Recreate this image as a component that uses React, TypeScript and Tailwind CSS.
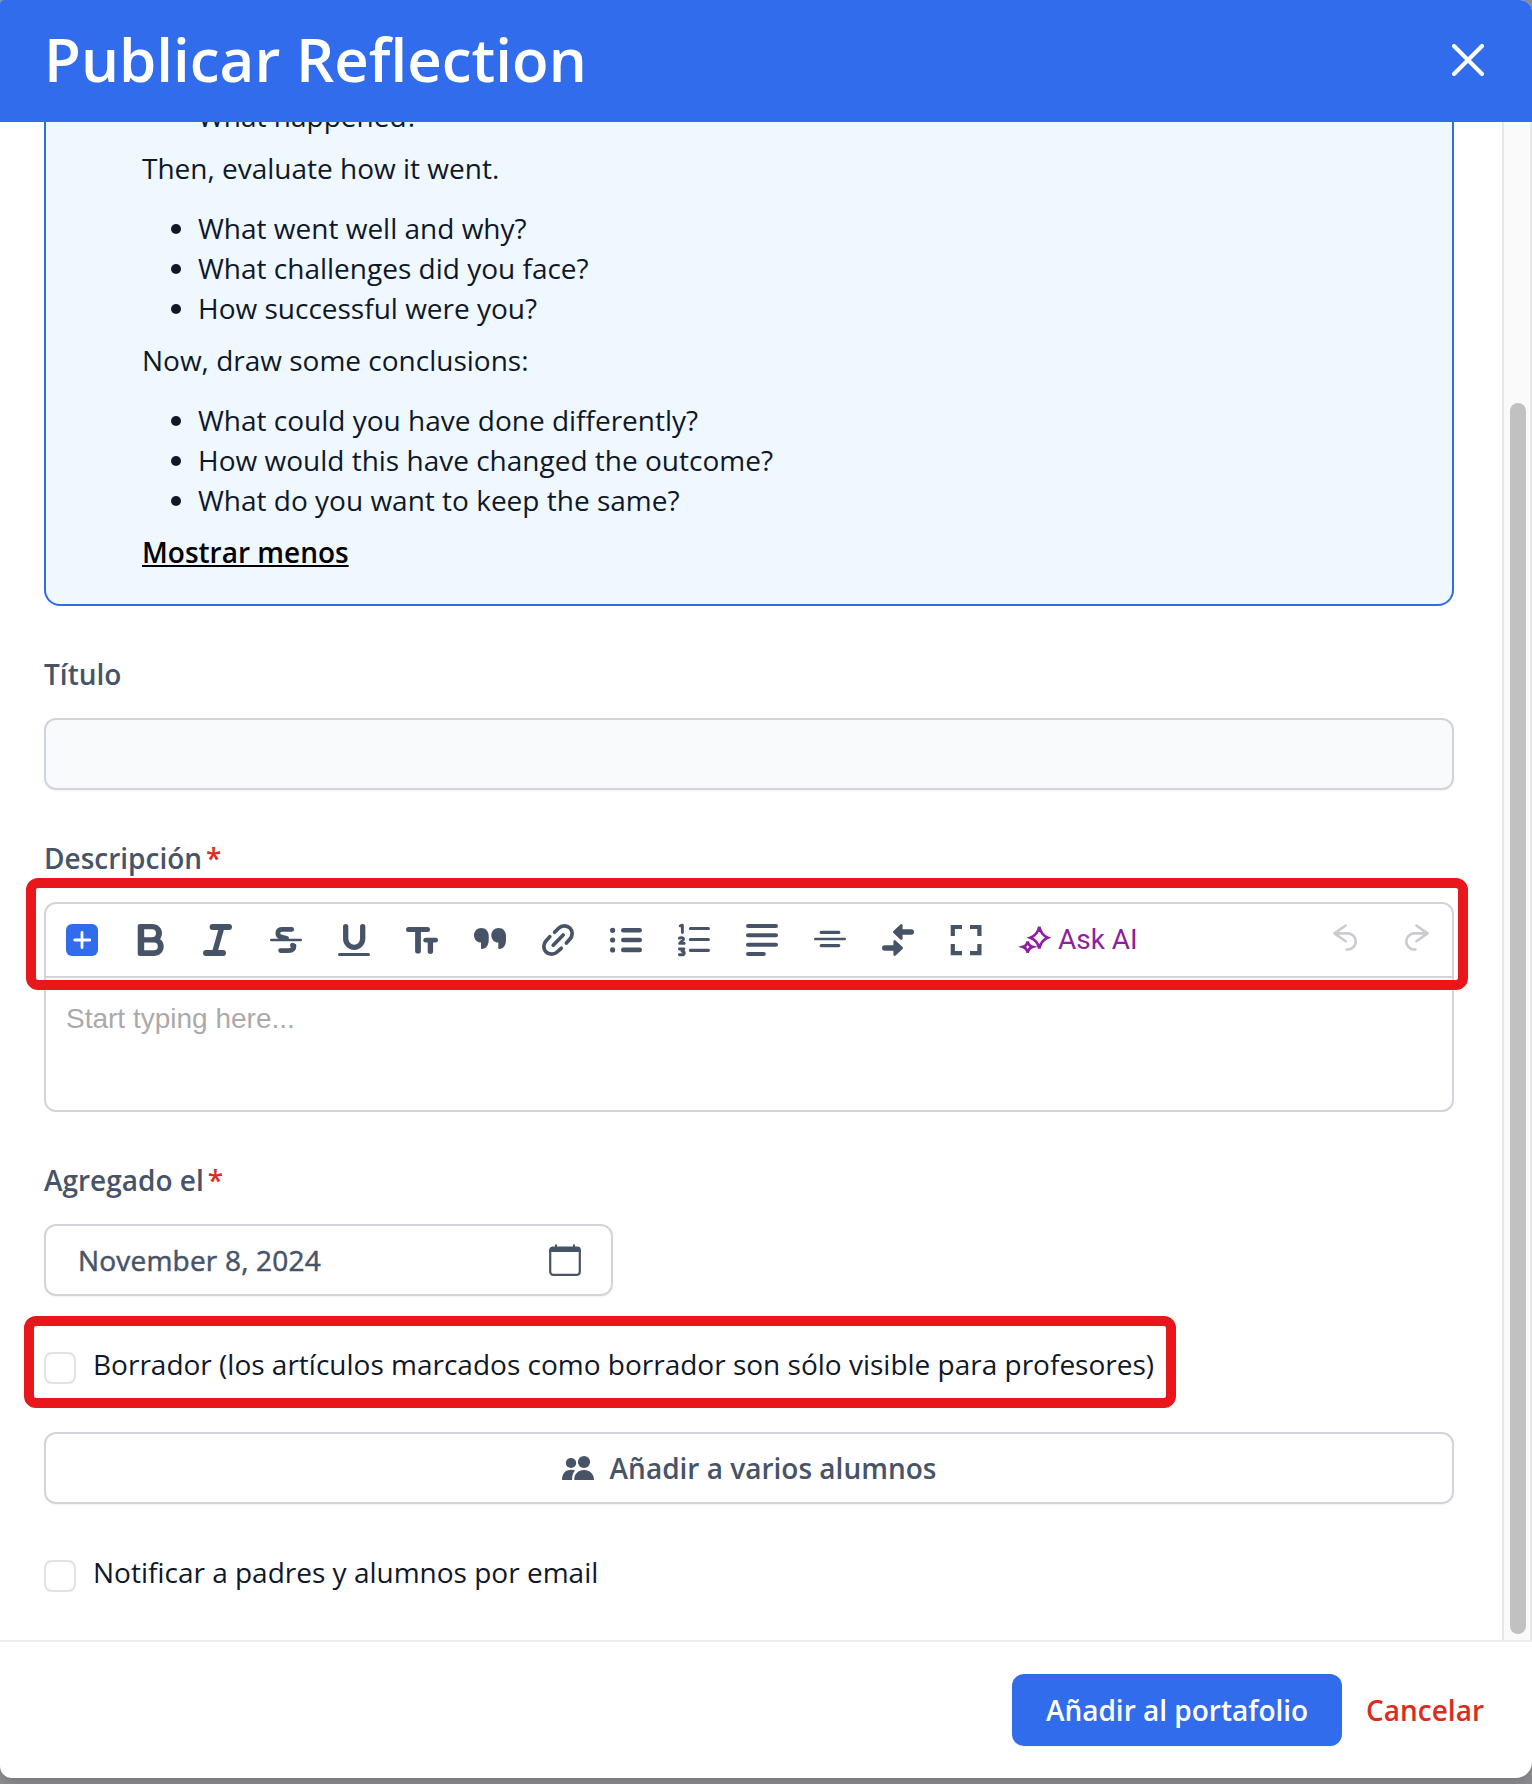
import type { ReactNode } from "react";

const evaluateQuestions = [
  "What went well and why?",
  "What challenges did you face?",
  "How successful were you?",
];

const conclusionQuestions = [
  "What could you have done differently?",
  "How would this have changed the outcome?",
  "What do you want to keep the same?",
];

function Icon({ children }: { children: ReactNode }) {
  return (
    <svg
      viewBox="0 0 32 32"
      className="size-8 shrink-0 overflow-visible"
      fill="none"
      stroke="currentColor"
      strokeLinecap="round"
      strokeLinejoin="round"
    >
      {children}
    </svg>
  );
}

function ToolbarIcons() {
  return (
    <>
      {/* Insert */}
      <Icon>
        <rect width="32" height="32" rx="6" fill="#306cec" stroke="none" />
        <path d="M8.8 16H23.8M16 8.3V23.5" stroke="#fff" strokeWidth="2.8" />
      </Icon>
      {/* Bold */}
      <Icon>
        <path
          fill="currentColor"
          stroke="none"
          fillRule="evenodd"
          d="M6 0H18C24 0 28 4 28 9C28 11.5 27.2 13.4 26 15C28.5 16.8 29.7 19.5 29.7 22.5C29.7 28 25.5 32 20 32H6A2.3 2.3 0 0 1 3.7 29.7V2.3A2.3 2.3 0 0 1 6 0ZM10.2 5.3V13.2H18A3.95 3.95 0 0 0 18 5.3ZM10.2 18.6V26.2H20A3.8 3.8 0 0 0 20 18.6Z"
        />
      </Icon>
      {/* Italic */}
      <Icon>
        <path d="M10.6 3H27M4 29H21" strokeWidth="6" />
        <path d="M19.6 4L12.8 28" strokeWidth="5.4" />
      </Icon>
      {/* Strikethrough */}
      <Icon>
        <path d="M1.1 16H30.9" strokeWidth="2.3" />
        <path d="M21.7 5.4H12.5C6.5 5.4 6.5 12 11.5 13.2L16.5 14.4" strokeWidth="4.8" />
        <path d="M10.6 26.6H18.5C22.5 26.6 24 24.5 24 21.8L22.5 21.3" strokeWidth="4.8" />
      </Icon>
      {/* Underline */}
      <Icon>
        <path d="M7.7 2.6V14.6A8.5 8.7 0 0 0 24.7 14.6V2.6" strokeWidth="5.3" />
        <path d="M1.5 30.5H30.5" strokeWidth="3" />
      </Icon>
      {/* Text size */}
      <Icon>
        <path d="M2.5 5.5H21.5" strokeWidth="5" />
        <path d="M12 6V26.7" strokeWidth="5.8" />
        <path d="M19.7 16.2H29.6" strokeWidth="4.8" />
        <path d="M24.4 17V27.2" strokeWidth="5.4" />
      </Icon>
      {/* Quote */}
      <Icon>
        <g fill="currentColor" stroke="none">
          <path d="M7.3 4C11.8 4 14.7 7.4 14.7 12V15.8C14.7 21.4 12.4 24.7 7.8 25C7.2 25 7 24.6 7 24.2V18.6C2.8 18.5 0 15.4 0 11.3C0 7.1 3.1 4 7.3 4Z" />
          <path d="M24.6 4C29.1 4 32 7.4 32 12V15.8C32 21.4 29.7 24.7 25.1 25C24.5 25 24.3 24.6 24.3 24.2V18.6C20.1 18.5 17.3 15.4 17.3 11.3C17.3 7.1 20.4 4 24.6 4Z" />
        </g>
      </Icon>
      {/* Link */}
      <Icon>
        <path
          d="M12.6 8.3L16.6 4.3C19.8 1.1 24.8 .9 27.9 4C31 7.1 30.9 12.2 27.7 15.3L24.4 19M7.8 12.6L4.3 16.6C1.1 19.8 1 24.8 4 27.9C7 31 12.2 30.9 15.4 27.7L19.2 24.3M11.2 21.2L21.2 11"
          strokeWidth="3.7"
        />
      </Icon>
      {/* Bullet list */}
      <Icon>
        <g fill="currentColor" stroke="none">
          <circle cx="2.6" cy="6.3" r="2.6" />
          <circle cx="2.6" cy="16" r="2.6" />
          <circle cx="2.6" cy="25.9" r="2.6" />
        </g>
        <path d="M13.3 6.3H29.7M13.3 16H29.7M13.3 25.9H29.7" strokeWidth="4.6" />
      </Icon>
      {/* Numbered list */}
      <Icon>
        <path d="M12.4 4.5H30.4M12.4 15.5H30.4M12.4 26.3H30.4" strokeWidth="3.2" />
        <path
          d="M2.2 1.8L4.4 1.2V8.6M1.4 14.1C3 13.3 5.6 13.4 5.6 15C5.6 17 2.2 17.6 1.6 19.4H6.2M1.4 25H5.9L4 27.2C7.2 27.4 6.8 30.8 4 30.8H1.4"
          strokeWidth="2.9"
        />
      </Icon>
      {/* Align left */}
      <Icon>
        <path d="M2 2H30M2 11.3H30M2 20.7H30M2 30H17.8" strokeWidth="4" />
      </Icon>
      {/* Divider */}
      <Icon>
        <path d="M7.2 8.4H24.8M7.2 21.6H24.8" strokeWidth="3.2" />
        <path d="M1.2 15H30.8" strokeWidth="2.4" />
      </Icon>
      {/* Page break */}
      <Icon>
        <path d="M17 8H29.2M2.8 24H15" strokeWidth="5.6" />
        <path
          d="M12.3 8L19.3 1.4V14.6ZM19.7 24L12.7 17.4V30.6Z"
          fill="currentColor"
          strokeWidth="2.6"
        />
      </Icon>
      {/* Fullscreen */}
      <Icon>
        <path
          d="M12 3H2.8V12M20 3H29.4V12M2.8 20V29.2H12M29.4 20V29.2H20"
          strokeWidth="4.2"
          strokeLinecap="butt"
          strokeLinejoin="miter"
        />
      </Icon>
    </>
  );
}

function FieldLabel({ text, required }: { text: string; required?: boolean }) {
  return (
    <label className="flex h-10 items-center gap-1 font-semibold text-[#475467]">
      {text}
      {required && <span className="text-[#d92d20]">*</span>}
    </label>
  );
}

function CheckRow({ text }: { text: string }) {
  return (
    <div className="flex h-10 items-start gap-[17px]">
      <span className="mt-2 size-8 shrink-0 rounded-lg border-2 border-[#e2e2e3] bg-white" />
      <span className="whitespace-nowrap">{text}</span>
    </div>
  );
}

export default function App() {
  return (
    <div className="h-[1784px] w-[1532px] overflow-hidden bg-[#8d8d91] font-['Open_Sans',sans-serif] text-[28px] leading-10 text-[#101828]">
      <div className="flex h-[1778px] flex-col overflow-hidden rounded-tl-[4px] rounded-tr-[12px] rounded-br-2xl rounded-bl-xl bg-white shadow-lg">
        {/* Header */}
        <header className="flex h-[122px] shrink-0 items-center justify-between bg-[#306cec] pr-12 pb-[3px] pl-11">
          <h1 className="pb-0.5 text-[60px] leading-[76px] font-semibold text-white">Publicar Reflection</h1>
          <svg viewBox="0 0 32 32" className="size-8 text-white" fill="none" stroke="currentColor">
            <path d="M2 2L30 30M30 2L2 30" strokeWidth="4" strokeLinecap="round" />
          </svg>
        </header>

        {/* Body */}
        <div className="flex h-[1518px] shrink-0">
          <main className="flex min-w-0 flex-1 flex-col overflow-hidden pr-12 pl-11">
            <section className="flex h-[484px] shrink-0 flex-col justify-end overflow-hidden rounded-b-2xl border-x-2 border-b-2 border-[#306cec] bg-[#eff7ff] pb-8 pl-24">
              <ul className="list-disc pl-14">
                <li>What happened?</li>
              </ul>
              <p className="mt-3">Then, evaluate how it went.</p>
              <ul className="mt-5 list-disc pl-14">
                {evaluateQuestions.map((q) => (
                  <li key={q}>{q}</li>
                ))}
              </ul>
              <p className="mt-3">Now, draw some conclusions:</p>
              <ul className="mt-5 list-disc pl-14">
                {conclusionQuestions.map((q) => (
                  <li key={q}>{q}</li>
                ))}
              </ul>
              <button className="mt-3 self-start font-semibold text-black underline">Mostrar menos</button>
            </section>

            <div className="mt-12">
              <FieldLabel text="Título" />
              <div className="mt-6 h-[72px] rounded-xl border-2 border-[#d0d5dd] bg-[#f9fafc] shadow-xs" />
            </div>

            <div className="relative mt-12">
              <FieldLabel text="Descripción" required />
              <div className="mt-6 h-[210px] rounded-xl border-2 border-[#d0d5dd]">
                <div className="flex h-[74px] items-center gap-9 border-b-2 border-[#d0d5dd] pr-[19px] pl-5 text-[#475467]">
                  <ToolbarIcons />
                  <span className="flex items-center gap-2 font-['Roboto',sans-serif] whitespace-nowrap text-[#8e1fa0]">
                    <Icon>
                      <path
                        d="M21.3 2.8C22.6 8.8 25.1 11.8 29.8 13.7C25.1 15.6 22.6 18.7 21.3 24.4C20 18.7 17.4 15.6 12.3 13.7C17.4 11.8 20 8.8 21.3 2.8ZM9.7 17.5C10.3 20.6 11.8 22.2 14.5 22.9C11.8 23.7 10.3 25.4 9.7 28.8C9.1 25.4 7.5 23.7 4.9 22.9C7.5 22.2 9.1 20.6 9.7 17.5Z"
                        strokeWidth="2.7"
                        strokeLinejoin="miter"
                      />
                    </Icon>
                    Ask AI
                  </span>
                  <span className="ml-auto flex items-center gap-10 text-[#c8cbd0]">
                    <Icon>
                      <path
                        d="M16.6 1.5L5.5 9.4L16.6 17.2M6 9.4H19.5A8.1 8.1 0 0 1 19.5 25.5H17.6"
                        strokeWidth="2.6"
                      />
                    </Icon>
                    <Icon>
                      <path
                        d="M15.4 1.5L26.5 9.4L15.4 17.2M26 9.4H12.5A8.1 8.1 0 0 0 12.5 25.5H14.4"
                        strokeWidth="2.6"
                      />
                    </Icon>
                  </span>
                </div>
                <p className="px-5 pt-[21px] font-['Liberation_Sans',sans-serif] text-[#aaaaaa]">Start typing here...</p>
              </div>
              {/* Toolbar highlight */}
              <div className="absolute top-10 -left-[18px] h-28 w-[1442px] rounded-xl border-[10px] border-[#e8171b]" />
            </div>

            <div className="mt-12">
              <FieldLabel text="Agregado el" required />
              <div className="mt-6 flex h-[72px] w-[569px] items-center justify-between rounded-xl border-2 border-[#d0d5dd] pr-[30px] pl-8 tracking-[0.2px] text-[#475467] shadow-xs [-webkit-text-stroke:0.5px_#475467]">
                November 8, 2024
                <Icon>
                  <rect x="1.2" y="4" width="29.6" height="26.8" rx="3" strokeWidth="2.2" />
                  <path d="M1.2 7V6A2.5 2.5 0 0 1 3.7 3.5H28.3A2.5 2.5 0 0 1 30.8 6V7Z" fill="currentColor" strokeWidth="1.8" />
                  <path d="M7 1.2V4M25 1.2V4" strokeWidth="2" />
                </Icon>
              </div>
            </div>

            <div className="relative mt-12">
              <CheckRow text="Borrador (los artículos marcados como borrador son sólo visible para profesores)" />
              {/* Draft option highlight */}
              <div className="absolute -top-7 -left-5 h-[92px] w-[1152px] rounded-xl border-[10px] border-[#e8171b]" />
            </div>

            <button className="mt-12 flex h-[72px] shrink-0 items-center justify-center gap-4 rounded-xl border-2 border-[#d0d5dd] font-semibold text-[#475467] shadow-xs">
              <svg viewBox="0 0 32 24" className="h-6 w-8" fill="currentColor">
                <ellipse cx="9" cy="7" rx="5.2" ry="5" />
                <ellipse cx="22" cy="6" rx="6.1" ry="6" />
                <path d="M12.2 24C12.2 17.8 16.4 14 22 14S32 17.8 32 24ZM0 24C0 17.8 3.6 13.8 9 13.8C10.6 13.8 11.9 14 13.1 14.5C11 16.8 10 19.7 10 24Z" />
              </svg>
              Añadir a varios alumnos
            </button>

            <div className="mt-12">
              <CheckRow text="Notificar a padres y alumnos por email" />
            </div>
          </main>

          {/* Scrollbar */}
          <div className="flex w-[30px] shrink-0 flex-col items-end border-x-2 border-[#e8e8e8] bg-[#fafafa] pt-[281px] pr-1">
            <div className="h-[1231px] w-4 rounded-full bg-[#c1c1c1]" />
          </div>
        </div>

        {/* Footer */}
        <footer className="flex flex-1 items-center justify-end gap-6 border-t-2 border-[#eaecf0] pr-12">
          <button className="h-[72px] w-[330px] rounded-xl bg-[#306cec] font-semibold text-white shadow-xs">
            Añadir al portafolio
          </button>
          <button className="font-semibold text-[#d92d20]">Cancelar</button>
        </footer>
      </div>
    </div>
  );
}
